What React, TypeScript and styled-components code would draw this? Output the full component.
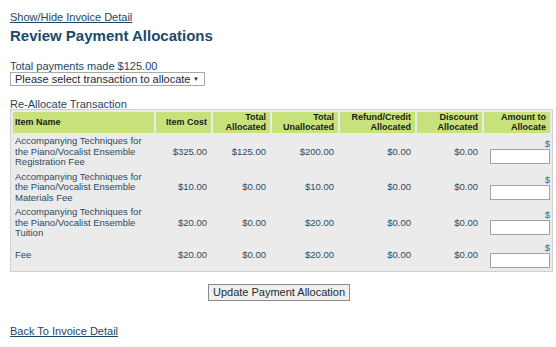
import React from "react";
import styled, { createGlobalStyle } from "styled-components";

const Global = createGlobalStyle`
  html, body { margin: 0; padding: 0; background: #fff; }
  body { font-family: "Liberation Sans", Arial, sans-serif; color: #2b4257; }
`;

const Page = styled.div`
  padding: 11px 6px 0 10px;
  font-size: 11px;
`;

const Link = styled.a`
  color: #1c4663;
  text-decoration: underline;
  font-size: 11px;
  line-height: 12px;
  cursor: pointer;
  display: inline-block;
`;

const Title = styled.h1`
  margin: 4px 0 0;
  font-size: 15px;
  line-height: 18px;
  font-weight: bold;
  color: #1a4a6c;
`;

const Total = styled.div`
  margin-top: 15px;
  font-size: 11px;
  line-height: 12px;
  color: #1c4663;
`;

const Select = styled.div`
  display: inline-flex;
  align-items: center;
  justify-content: space-between;
  box-sizing: border-box;
  width: 195px;
  height: 14px;
  border: 1px solid #a9a9a9;
  padding: 0 5px 0 4px;
  font-size: 11px;
  color: #1c2a38;
  background: #fff;
`;

const Arrow = styled.span`
  font-size: 6px;
`;

const SectionLabel = styled.div`
  margin-top: 12px;
  font-size: 11px;
  line-height: 12px;
  color: #1c4663;
`;

const Table = styled.table`
  width: 540px;
  table-layout: fixed;
  border: 1px solid #d0d0d0;
  background: #ebebeb;
  border-spacing: 2px;
  border-collapse: separate;
  margin: -1px 0 0 0;
`;

const Th = styled.th<{ $left?: boolean; $w: number }>`
  width: ${(p) => p.$w}px;
  background: #c8e27b;
  color: #1a1a1a;
  font-size: 9px;
  font-weight: bold;
  line-height: 10px;
  text-align: ${(p) => (p.$left ? "left" : "right")};
  padding: 0 4px 1px 2px;
  height: 20px;
  box-sizing: border-box;
  vertical-align: middle;
`;

const Td = styled.td<{ $left?: boolean }>`
  font-size: 9.5px;
  line-height: 10.5px;
  color: #2d4a60;
  text-align: ${(p) => (p.$left ? "left" : "right")};
  padding: 1px 4px 1px 2px;
  vertical-align: middle;
`;

const AmountCell = styled.td`
  text-align: right;
  padding: 1px 0;
  vertical-align: middle;
`;

const Dollar = styled.div`
  font-size: 9.5px;
  line-height: 10px;
  color: #2a6fa8;
  text-align: right;
`;

const Input = styled.input`
  box-sizing: border-box;
  width: 60px;
  height: 15px;
  border: 1px solid #a3a3a3;
  background: #fff;
  display: block;
  margin-left: auto;
`;

const ButtonRow = styled.div`
  display: flex;
  justify-content: center;
  width: 538px;
  margin-top: 12px;
`;

const Button = styled.button`
  font-family: "Liberation Sans", Arial, sans-serif;
  font-size: 11px;
  color: #1c2a38;
  background: #efefef;
  border: 1px solid #8a8a8a;
  padding: 1px 4px;
  height: 17px;
  line-height: 13px;
`;

const Footer = styled.div`
  margin-top: 24px;
`;

const rows = [
  {
    name: "Accompanying Techniques for the Piano/Vocalist Ensemble Registration Fee",
    cost: "$325.00",
    alloc: "$125.00",
    unalloc: "$200.00",
  },
  {
    name: "Accompanying Techniques for the Piano/Vocalist Ensemble Materials Fee",
    cost: "$10.00",
    alloc: "$0.00",
    unalloc: "$10.00",
  },
  {
    name: "Accompanying Techniques for the Piano/Vocalist Ensemble Tuition",
    cost: "$20.00",
    alloc: "$0.00",
    unalloc: "$20.00",
  },
  { name: "Fee", cost: "$20.00", alloc: "$0.00", unalloc: "$20.00" },
];

export default function App() {
  return (
    <>
      <Global />
      <Page>
        <Link>Show/Hide Invoice Detail</Link>
        <Title>Review Payment Allocations</Title>
        <Total>Total payments made $125.00</Total>
        <Select>
          <span>Please select transaction to allocate</span>
          <Arrow>▼</Arrow>
        </Select>
        <SectionLabel>Re-Allocate Transaction</SectionLabel>
        <Table>
          <thead>
            <tr>
              <Th $left $w={141}>Item Name</Th>
              <Th $w={55}>Item Cost</Th>
              <Th $w={57}>Total<br />Allocated</Th>
              <Th $w={66}>Total<br />Unallocated</Th>
              <Th $w={75}>Refund/Credit<br />Allocated</Th>
              <Th $w={65}>Discount<br />Allocated</Th>
              <Th $w={66}>Amount to<br />Allocate</Th>
            </tr>
          </thead>
          <tbody>
            {rows.map((r, i) => (
              <tr key={i}>
                <Td $left>{r.name}</Td>
                <Td>{r.cost}</Td>
                <Td>{r.alloc}</Td>
                <Td>{r.unalloc}</Td>
                <Td>$0.00</Td>
                <Td>$0.00</Td>
                <AmountCell>
                  <Dollar>$</Dollar>
                  <Input type="text" />
                </AmountCell>
              </tr>
            ))}
          </tbody>
        </Table>
        <ButtonRow>
          <Button>Update Payment Allocation</Button>
        </ButtonRow>
        <Footer>
          <Link>Back To Invoice Detail</Link>
        </Footer>
      </Page>
    </>
  );
}
